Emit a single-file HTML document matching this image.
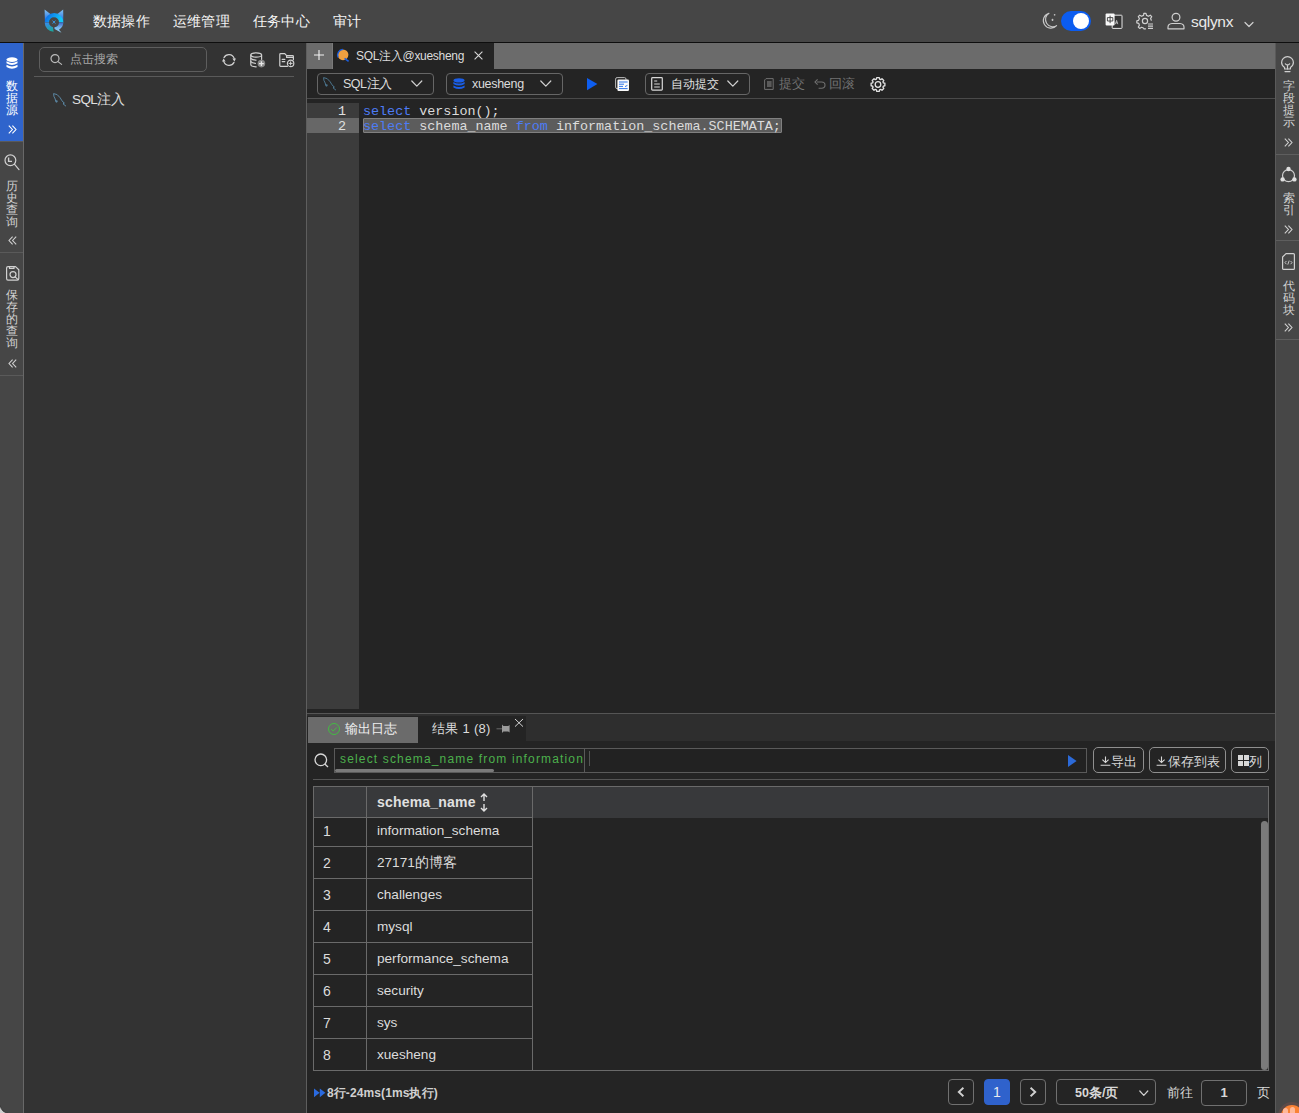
<!DOCTYPE html>
<html><head><meta charset="utf-8">
<style>
*{box-sizing:border-box;margin:0;padding:0}
html,body{width:1299px;height:1113px;overflow:hidden;background:#242424;font-family:"Liberation Sans",sans-serif;color:#dcdcdc}
.a{position:absolute}
svg{position:absolute;display:block;overflow:visible}
.nav{top:11px;font-size:14px;color:#f6f6f6;line-height:20px;letter-spacing:0.2px;font-weight:500}
.vt{font-size:12px;line-height:12px;width:23px;text-align:center;color:#d2d2d2}
.sel{border:1px solid #666;border-radius:4px;height:22px}
.code{font-family:"Liberation Mono",monospace;font-size:13.4px;line-height:15px;white-space:pre}
.row{left:313px;width:956px;height:1px;background:#6a6a6a}
.rn{left:323px;font-size:14px;line-height:16px;color:#dcdcdc}
.rv{left:377px;font-size:13.6px;line-height:16px;color:#dcdcdc}
.btn{border:1px solid #8f8f8f;border-radius:5px;height:26px;top:747px}
.bt{top:754px;font-size:12.5px;line-height:16px;color:#d8d8d8;font-weight:500}
.pg{border:1px solid #707070;border-radius:4px;height:26px;top:1079px}
.st{fill:none;stroke:#d0d0d0;stroke-width:1.2;stroke-linecap:round;stroke-linejoin:round}
</style></head><body>
<!-- header -->
<div class="a" style="left:0;top:0;width:1299px;height:42px;background:#464646"></div>
<div class="a" style="left:0;top:42px;width:1299px;height:1px;background:#0e0e0e"></div>
<svg style="left:44px;top:9px" width="20" height="24" viewBox="0 0 20 24">
<defs>
<linearGradient id="ge" x1="0" y1="0" x2="0" y2="1"><stop offset="0" stop-color="#84c4f4"/><stop offset="1" stop-color="#1c66dc"/></linearGradient>
<linearGradient id="gt" x1="0" y1="0" x2="1" y2="0.3"><stop offset="0" stop-color="#0a5ee6"/><stop offset="1" stop-color="#14c8f6"/></linearGradient>
<linearGradient id="gb" x1="0" y1="0" x2="0.4" y2="1"><stop offset="0" stop-color="#3a8af0"/><stop offset="1" stop-color="#1ea4a0"/></linearGradient>
<linearGradient id="gr" x1="0" y1="0" x2="0" y2="1"><stop offset="0" stop-color="#3a66c8"/><stop offset="0.5" stop-color="#78b8ee"/><stop offset="1" stop-color="#9ad8fa"/></linearGradient>
</defs>
<path d="M0.6 0.4 L6.4 5 L0.9 12.6 Z" fill="url(#ge)"/>
<path d="M19.2 0.4 L13.4 5 L19.3 12.6 Z" fill="url(#ge)"/>
<path d="M0.7 13.3 A9.3 9.3 0 0 1 19.4 13.6 L15 13.3 A5 5 0 0 0 5 13.3 Z" fill="url(#gt)"/>
<path d="M0.7 13.6 L5 13.6 A5 5 0 0 0 9 18.2 L9.6 22.8 A9.3 9.3 0 0 1 0.7 13.6 Z" fill="url(#gb)"/>
<path d="M19.4 13.6 L15 13.6 A5 5 0 0 1 10.4 18.3 L10.6 20 L17.5 23.8 L15 20.8 A9.3 9.3 0 0 0 19.4 13.6 Z" fill="url(#gr)"/>
<path d="M8.6 11.6 L11.4 14.6 M11.4 11.6 L8.6 14.6" stroke="#38a0f0" stroke-width="0.9"/>
</svg>
<div class="a nav" style="left:93px">数据操作</div>
<div class="a nav" style="left:173px">运维管理</div>
<div class="a nav" style="left:253px">任务中心</div>
<div class="a nav" style="left:333px">审计</div>

<!-- header right -->
<svg style="left:1042px;top:12px" width="16" height="18" viewBox="0 0 16 18">
<path d="M7 1.2 A7.6 7.6 0 1 0 14.6 13.6 A6.2 6.2 0 0 1 7 1.2 Z" class="st" style="stroke:#c8c8c8;stroke-width:1.1"/>
<path d="M12.6 2 l0 1.6 M11.8 2.8 l1.6 0" stroke="#c8c8c8" stroke-width="0.8"/>
<path d="M10.5 6.8 l0 2.2 M9.4 7.9 l2.2 0" stroke="#c8c8c8" stroke-width="0.9"/>
</svg>
<div class="a" style="left:1061px;top:11px;width:30px;height:20px;border-radius:10px;background:#0b5cf0"></div>
<div class="a" style="left:1073px;top:13px;width:16px;height:16px;border-radius:8px;background:#fff"></div>
<svg style="left:1105px;top:13px" width="18" height="16" viewBox="0 0 18 16">
<rect x="7.2" y="2.2" width="9.8" height="13.2" rx="0.6" fill="#333" stroke="#e6e6e6" stroke-width="1"/>
<path d="M10.4 11.2 L11.6 7.4 L12.8 11.2 M10.9 9.8 h1.4" fill="none" stroke="#cfcfcf" stroke-width="0.8"/>
<rect x="0.6" y="0.6" width="9" height="12" rx="1" fill="#f8f8f8"/>
<path d="M2.4 4.6 h5.4 v3.4 h-5.4 Z M5.1 2.6 v7.6" fill="none" stroke="#3a3a3a" stroke-width="0.9"/>
</svg>
<svg style="left:1136px;top:12px" width="18" height="18" viewBox="0 0 18 18">
<path d="M8 1.3 L10 1.3 L10.5 3.4 L12.4 4.3 L14.3 3.2 L15.7 4.6 L14.6 6.5 L15.3 8.2" class="st"/>
<path d="M8 1.3 L7.5 3.4 L5.6 4.3 L3.7 3.2 L2.3 4.6 L3.4 6.5 L2.6 8.3 L0.8 8.8 L0.8 10.8 L2.7 11.3 L3.4 13.1 L2.3 15 L3.7 16.4 L5.6 15.3 L7.4 16 L8 16.8 L9.5 16.8" class="st"/>
<circle cx="9" cy="9" r="2.6" class="st"/>
<path d="M12 12 h5 M12 14.2 h5 M12 16.4 h5" stroke="#d0d0d0" stroke-width="1.2"/>
</svg>
<svg style="left:1167px;top:12px" width="18" height="18" viewBox="0 0 18 18">
<circle cx="9" cy="5.2" r="3.9" class="st"/>
<path d="M1 16.8 L1 15.2 Q1 11.8 5 11.5 L13 11.5 Q17 11.8 17 15.2 L17 16.8 Z" class="st"/>
</svg>
<div class="a" style="left:1191px;top:13px;font-size:15.5px;line-height:18px;color:#eaeaea;letter-spacing:-0.3px">sqlynx</div>
<svg style="left:1244px;top:20.5px" width="10" height="7" viewBox="0 0 10 7"><path d="M1 1.5 L5 5.5 L9 1.5" class="st"/></svg>

<!-- left strip -->
<div class="a" style="left:0;top:43px;width:23px;height:1070px;background:#464646"></div>
<div class="a" style="left:0;top:43px;width:23px;height:98px;background:#2f64cc"></div>
<div class="a" style="left:23px;top:43px;width:1px;height:1070px;background:#686868"></div>
<div class="a" style="left:0;top:141px;width:23px;height:1px;background:#5a5a5a"></div>
<div class="a" style="left:0;top:252px;width:23px;height:1px;background:#5a5a5a"></div>
<div class="a" style="left:0;top:375px;width:23px;height:1px;background:#5a5a5a"></div>
<svg style="left:6px;top:57px" width="12" height="13" viewBox="0 0 12 13">
<ellipse cx="6" cy="2.6" rx="5.5" ry="2.4" fill="#fff"/>
<path d="M0.5 4.2 Q6 7.6 11.5 4.2 L11.5 6.2 Q6 9.6 0.5 6.2 Z" fill="#fff"/>
<path d="M0.5 7.8 Q6 11.2 11.5 7.8 L11.5 10 Q6 13.4 0.5 10 Z" fill="#fff"/>
</svg>
<div class="a vt" style="left:0;top:80px;color:#fff">数<br>据<br>源</div>
<svg style="left:8px;top:125px" width="9" height="9" viewBox="0 0 9 9"><path d="M0.8 0.6 L4.4 4.5 L0.8 8.4 M4.4 0.6 L8 4.5 L4.4 8.4" fill="none" stroke="#fff" stroke-width="1.1"/></svg>
<svg style="left:4px;top:154px" width="16" height="17" viewBox="0 0 16 17">
<circle cx="6.4" cy="6.3" r="5.4" class="st"/>
<path d="M10.4 10.2 L15 15.6" class="st"/>
<path d="M4.6 3.6 L4.6 7.4 L8 7.4" stroke="#d0d0d0" stroke-width="1.4" fill="none"/>
</svg>
<div class="a vt" style="left:0;top:180px">历<br>史<br>查<br>询</div>
<svg style="left:8px;top:236px" width="9" height="9" viewBox="0 0 9 9"><path d="M8.2 0.6 L4.6 4.5 L8.2 8.4 M4.6 0.6 L1 4.5 L4.6 8.4" fill="none" stroke="#d0d0d0" stroke-width="1.1"/></svg>
<svg style="left:6px;top:266px" width="14" height="15" viewBox="0 0 14 15">
<path d="M2 0.6 L9.5 0.6 L12.8 3.8 L12.8 12.6 Q12.8 14.2 11.2 14.2 L2 14.2 Q0.6 14.2 0.6 12.6 L0.6 2 Q0.6 0.6 2 0.6 Z" class="st"/>
<path d="M3.5 0.8 L3.5 2.4 L8 2.4 L8 0.8" class="st"/>
<circle cx="7" cy="8.6" r="3" class="st"/>
<path d="M9.2 10.8 L11.8 13.4" class="st"/>
</svg>
<div class="a vt" style="left:0;top:289px">保<br>存<br>的<br>查<br>询</div>
<svg style="left:8px;top:359px" width="9" height="9" viewBox="0 0 9 9"><path d="M8.2 0.6 L4.6 4.5 L8.2 8.4 M4.6 0.6 L1 4.5 L4.6 8.4" fill="none" stroke="#d0d0d0" stroke-width="1.1"/></svg>

<!-- left panel -->
<div class="a" style="left:24px;top:43px;width:282px;height:1070px;background:#333"></div>
<div class="a" style="left:39px;top:47px;width:168px;height:25px;border:1px solid #5e5e5e;border-radius:5px"></div>
<svg style="left:50px;top:54px" width="13" height="11" viewBox="0 0 13 11"><circle cx="5" cy="4.6" r="4" class="st" style="stroke:#bbb"/><path d="M8 7.6 L11.6 10.4" class="st" style="stroke:#bbb"/></svg>
<div class="a" style="left:70px;top:51px;font-size:12px;line-height:16px;color:#a8a8a8">点击搜索</div>
<svg style="left:221px;top:53px" width="16" height="14" viewBox="0 0 16 14">
<path d="M3 4.6 A5.6 5.6 0 0 1 13.2 5.4" class="st"/>
<path d="M13 9.4 A5.6 5.6 0 0 1 2.8 8.6" class="st"/>
<path d="M11.4 5.4 L15 5.4 L13.4 8.4 Z" fill="#d0d0d0"/>
<path d="M4.6 8.6 L1 8.6 L2.6 5.6 Z" fill="#d0d0d0"/>
</svg>
<svg style="left:250px;top:52px" width="16" height="16" viewBox="0 0 16 16">
<ellipse cx="6.2" cy="3" rx="5.4" ry="2.2" class="st"/>
<path d="M0.8 3 L0.8 12.6 Q0.8 14.8 6.2 14.8" class="st"/>
<path d="M11.6 3 L11.6 7.5" class="st"/>
<path d="M0.8 6.3 Q2 7.8 6 8.2 M0.8 9.6 Q2 11 5.4 11.4" class="st"/>
<circle cx="11.4" cy="11.6" r="3.8" fill="#8a8a8a"/>
<path d="M11.4 9.2 L11.4 14 M9 11.6 L13.8 11.6" stroke="#e8e8e8" stroke-width="1.3"/>
</svg>
<svg style="left:279px;top:53px" width="16" height="14" viewBox="0 0 16 14">
<path d="M8.4 13.4 L1.6 13.4 Q0.8 13.4 0.8 12.6 L0.8 1.4 Q0.8 0.6 1.6 0.6 L5.8 0.6 L7.6 2.6 L13.6 2.6 Q14.4 2.6 14.4 3.4 L14.4 6.6" class="st"/>
<path d="M7.6 2.6 L7.6 4.4 L14.4 4.4" class="st"/>
<path d="M3.2 6.4 h2.6 M3.2 8.6 h2.6" class="st"/>
<circle cx="11.6" cy="10.4" r="3.2" class="st"/>
<path d="M11.6 8.8 L11.6 12 M10 10.4 L13.2 10.4" class="st" style="stroke-width:1"/>
</svg>
<div class="a" style="left:34px;top:76px;width:260px;height:1px;background:#5a5a5a"></div>
<svg style="left:53px;top:93px" width="14" height="14" viewBox="0 0 14 14">
<path d="M0.6 0.6 Q4.5 0.6 7.2 4.8 Q8.6 7.4 10 9 L11.4 10 L10 10.8 L13 13.2" fill="none" stroke="#5f8fae" stroke-width="0.9"/>
<path d="M0.6 0.6 Q0.4 3.4 2.2 6 L3 9.2 L4.6 8.6" fill="none" stroke="#5f8fae" stroke-width="0.9"/>
<path d="M2.2 7 L3.6 9 L4.8 7.8 Z" fill="#5f8fae"/>
</svg>
<div class="a" style="left:72px;top:92px;font-size:13.5px;line-height:16px;color:#e0e0e0;letter-spacing:-0.6px;font-weight:500">SQL注入</div>

<!-- main -->
<div class="a" style="left:306px;top:43px;width:1px;height:1070px;background:#5e5e5e"></div>
<div class="a" style="left:307px;top:43px;width:968px;height:26px;background:#6b6b6b"></div>
<div class="a" style="left:332px;top:43px;width:1px;height:26px;background:#7a7a7a"></div>
<svg style="left:313px;top:49px" width="12" height="12" viewBox="0 0 12 12"><path d="M6 1 L6 11 M1 6 L11 6" stroke="#f4f4f4" stroke-width="1.1"/></svg>
<div class="a" style="left:333px;top:43px;width:161px;height:26px;background:#242424"></div>
<svg style="left:337px;top:49px" width="13" height="13" viewBox="0 0 13 13">
<circle cx="6" cy="5.8" r="5.4" fill="#f0a040"/>
<path d="M1.2 8.4 A5.6 5.6 0 0 1 6 0.4" fill="none" stroke="#1a5ee0" stroke-width="1.4"/>
<path d="M7.6 9.4 L11.6 12.4" stroke="#1a5ee0" stroke-width="1.6"/>
</svg>
<div class="a" style="left:356px;top:48px;font-size:12px;line-height:16px;color:#dcdcdc;letter-spacing:-0.3px">SQL注入@xuesheng</div>
<svg style="left:474px;top:51px" width="9" height="9" viewBox="0 0 9 9"><path d="M0.6 0.6 L8.4 8.4 M8.4 0.6 L0.6 8.4" stroke="#d8d8d8" stroke-width="1.1"/></svg>

<!-- toolbar -->
<div class="a sel" style="left:317px;top:73px;width:117px"></div>
<svg style="left:323px;top:77px" width="14" height="14" viewBox="0 0 14 14">
<path d="M0.6 0.6 Q4.5 0.6 7.2 4.8 Q8.6 7.4 10 9 L11.4 10 L10 10.8 L13 13.2" fill="none" stroke="#4f7d98" stroke-width="0.9"/>
<path d="M0.6 0.6 Q0.4 3.4 2.2 6 L3 9.2 L4.6 8.6" fill="none" stroke="#4f7d98" stroke-width="0.9"/>
<path d="M2.2 7 L3.6 9 L4.8 7.8 Z" fill="#4f7d98"/>
</svg>
<div class="a" style="left:343px;top:76px;font-size:12.5px;line-height:16px;letter-spacing:-0.5px">SQL注入</div>
<svg style="left:411px;top:80px" width="12" height="8" viewBox="0 0 12 8"><path d="M0.8 1 L5.8 6.2 L10.8 1" class="st"/></svg>
<div class="a sel" style="left:446px;top:73px;width:117px"></div>
<svg style="left:453px;top:78px" width="12" height="12" viewBox="0 0 12 12">
<ellipse cx="6" cy="2.4" rx="5.6" ry="2.2" fill="#1a5ee8"/>
<path d="M0.4 3.9 Q6 7.2 11.6 3.9 L11.6 5.9 Q6 9.2 0.4 5.9 Z" fill="#1a5ee8"/>
<path d="M0.4 7.4 Q6 10.8 11.6 7.4 L11.6 9.4 Q6 12.8 0.4 9.4 Z" fill="#1a5ee8"/>
</svg>
<div class="a" style="left:472px;top:76px;font-size:12.5px;line-height:16px;letter-spacing:-0.3px">xuesheng</div>
<svg style="left:540px;top:80px" width="12" height="8" viewBox="0 0 12 8"><path d="M0.8 1 L5.8 6.2 L10.8 1" class="st"/></svg>
<svg style="left:587px;top:78px" width="11" height="13" viewBox="0 0 11 13"><path d="M0 0 L10.4 6.1 L0 12.2 Z" fill="#0e5ef0"/></svg>
<svg style="left:615px;top:77px" width="15" height="15" viewBox="0 0 15 15">
<rect x="0.6" y="0.6" width="10.4" height="11" rx="1.5" fill="none" stroke="#bbb" stroke-width="1"/>
<rect x="2.4" y="2.6" width="11.6" height="11.4" rx="1.2" fill="#fafafa"/>
<path d="M4 5 h8.6 M4 7.2 h5 M4 9.4 h4 M4 11.6 h8.6" stroke="#2f74e8" stroke-width="1"/>
<path d="M10 9.6 L12.4 8.4" stroke="#2f74e8" stroke-width="1"/>
</svg>
<div class="a sel" style="left:645px;top:73px;width:105px"></div>
<svg style="left:651px;top:77px" width="12" height="14" viewBox="0 0 12 14">
<rect x="0.7" y="0.7" width="10.6" height="12.4" rx="0.8" fill="none" stroke="#d8d8d8" stroke-width="1.2"/>
<path d="M3.2 4 h3 M3.2 7 h5.6 M3.2 10 h5.6" stroke="#d8d8d8" stroke-width="1.1"/>
</svg>
<div class="a" style="left:671px;top:76px;font-size:12px;line-height:16px;color:#e0e0e0;font-weight:500">自动提交</div>
<svg style="left:727px;top:80px" width="12" height="8" viewBox="0 0 12 8"><path d="M0.8 1 L5.8 6.2 L10.8 1" class="st"/></svg>
<svg style="left:764px;top:78px" width="10" height="12" viewBox="0 0 10 12">
<path d="M2 0.6 L9.2 0.6 L9.2 11.4 L0.6 11.4 L0.6 2 Z" fill="none" stroke="#707070" stroke-width="1"/>
<rect x="3" y="3" width="4.6" height="6" fill="#5a5a5a"/>
</svg>
<div class="a" style="left:779px;top:76px;font-size:12.5px;line-height:16px;color:#727272;font-weight:500">提交</div>
<svg style="left:814px;top:79px" width="12" height="10" viewBox="0 0 12 10">
<path d="M3 3 L7.6 3 Q11 3 11 6 Q11 9.2 7.6 9.2 L4.6 9.2" fill="none" stroke="#707070" stroke-width="1.1"/>
<path d="M3.6 0.4 L1 3 L3.6 5.6" fill="none" stroke="#707070" stroke-width="1.1"/>
</svg>
<div class="a" style="left:829px;top:76px;font-size:12.5px;line-height:16px;color:#727272;font-weight:500">回滚</div>
<svg style="left:870px;top:77px" width="16" height="15" viewBox="0 0 16 15"><path d="M6.44 2.12 L6.74 0.61 L9.26 0.61 L9.56 2.12 L10.70 2.59 L11.98 1.74 L13.76 3.52 L12.91 4.80 L13.38 5.94 L14.89 6.24 L14.89 8.76 L13.38 9.06 L12.91 10.20 L13.76 11.48 L11.98 13.26 L10.70 12.41 L9.56 12.88 L9.26 14.39 L6.74 14.39 L6.44 12.88 L5.30 12.41 L4.02 13.26 L2.24 11.48 L3.09 10.20 L2.62 9.06 L1.11 8.76 L1.11 6.24 L2.62 5.94 L3.09 4.80 L2.24 3.52 L4.02 1.74 L5.30 2.59 Z" fill="none" stroke="#e4e4e4" stroke-width="1.3" stroke-linejoin="round"/><circle cx="8" cy="7.5" r="2.8" fill="none" stroke="#e4e4e4" stroke-width="1.3"/></svg>
<div class="a" style="left:307px;top:98px;width:968px;height:1px;background:#4a4a4a"></div>

<!-- editor -->
<div class="a" style="left:307px;top:103px;width:52px;height:606px;background:#3c3c3c"></div>
<div class="a" style="left:307px;top:118px;width:52px;height:15px;background:#676767"></div>
<div class="a" style="left:363px;top:118px;width:419px;height:15px;background:#5c5c5c;border:1px solid #808080;border-radius:1px"></div>
<div class="a code" style="left:307px;top:104px;width:39px;text-align:right;color:#e0e0e0">1
2</div>
<div class="a code" style="left:363px;top:104px;color:#dcdcdc"><span style="color:#4d7cf6">select</span> version();
<span style="color:#4d7cf6">select</span> schema_name <span style="color:#4d7cf6">from</span> information_schema.SCHEMATA;</div>
<div class="a" style="left:307px;top:713px;width:968px;height:1px;background:#555"></div>

<!-- result tabs -->
<div class="a" style="left:307px;top:714px;width:968px;height:27px;background:#2e2e2e"></div>
<div class="a" style="left:307px;top:716px;width:219px;height:26px;background:#242424"></div>
<div class="a" style="left:308px;top:717px;width:110px;height:26px;background:#6b6b6b"></div>
<svg style="left:328px;top:723px" width="12" height="12" viewBox="0 0 12 12"><circle cx="6" cy="6" r="5.5" fill="none" stroke="#44bb44" stroke-width="1"/><path d="M3.2 6.2 L5.2 8 L8.8 4.4" fill="none" stroke="#44bb44" stroke-width="1"/></svg>
<div class="a" style="left:345px;top:721px;font-size:13.2px;line-height:16px;color:#f0f0f0;font-weight:500">输出日志</div>
<div class="a" style="left:432px;top:721px;font-size:13px;line-height:16px;color:#dcdcdc;letter-spacing:0.3px">结果 1 (8)</div>
<svg style="left:496px;top:724px" width="14" height="10" viewBox="0 0 14 10"><path d="M0.5 4.8 L6 4.8" stroke="#7a7a7a" stroke-width="0.8"/><path d="M6 0.6 L7.4 2 L12.2 2 L13.6 1 L13.6 8.6 L12.2 7.6 L7.4 7.6 L6 9 Z" fill="#9a9a9a"/></svg>
<svg style="left:515px;top:719px" width="8" height="8" viewBox="0 0 8 8"><path d="M0 0 L8 7.6 M8 0 L0 7.6" stroke="#e8e8e8" stroke-width="0.9"/></svg>

<!-- search -->
<svg style="left:314px;top:753px" width="15" height="15" viewBox="0 0 15 15"><circle cx="6.8" cy="6.8" r="5.8" fill="none" stroke="#d8d8d8" stroke-width="1.3"/><path d="M10.8 11 L14 14" stroke="#d8d8d8" stroke-width="1.3"/></svg>
<div class="a" style="left:334px;top:748px;width:753px;height:25px;border:1px solid #5a5a5a;background:#222"></div>
<div class="a" style="left:584px;top:749px;width:1px;height:23px;background:#5a5a5a"></div>
<div class="a" style="left:589px;top:751px;width:1px;height:15px;background:#555"></div>
<div class="a" style="left:335px;top:769px;width:159px;height:3px;background:#7a7a7a;border-radius:2px"></div>
<div class="a" style="left:340px;top:751px;font-size:12px;line-height:16px;color:#4cb04c;letter-spacing:1.16px;width:244px;overflow:hidden;white-space:nowrap">select schema_name from information</div>
<svg style="left:1068px;top:755px" width="9" height="12" viewBox="0 0 9 12"><path d="M0 0 L8.6 6 L0 12 Z" fill="#2c6ad8"/></svg>
<div class="a btn" style="left:1093px;width:51px"></div>
<svg style="left:1100px;top:756px" width="11" height="10" viewBox="0 0 11 10"><path d="M5.5 0.5 L5.5 6.4 M2.4 3.6 L5.5 6.6 L8.6 3.6 M0.6 9.2 L10.4 9.2" fill="none" stroke="#d8d8d8" stroke-width="1.1"/></svg>
<div class="a bt" style="left:1111px">导出</div>
<div class="a btn" style="left:1149px;width:77px"></div>
<svg style="left:1156px;top:756px" width="11" height="10" viewBox="0 0 11 10"><path d="M5.5 0.5 L5.5 6.4 M2.4 3.6 L5.5 6.6 L8.6 3.6 M0.6 9.2 L10.4 9.2" fill="none" stroke="#d8d8d8" stroke-width="1.1"/></svg>
<div class="a bt" style="left:1168px">保存到表</div>
<div class="a btn" style="left:1231px;width:38px"></div>
<svg style="left:1238px;top:755px" width="11" height="11" viewBox="0 0 11 11"><rect x="0" y="0" width="5" height="5" fill="#d8d8d8"/><rect x="6" y="0" width="5" height="5" fill="#d8d8d8"/><rect x="0" y="6" width="5" height="5" fill="#d8d8d8"/><rect x="6" y="6" width="5" height="5" fill="#d8d8d8"/></svg>
<div class="a bt" style="left:1249px">列</div>
<div class="a" style="left:313px;top:779px;width:956px;height:1px;background:#555"></div>

<!-- table -->
<div class="a" style="left:313px;top:786px;width:956px;height:32px;background:#38393b"></div>
<div class="a row" style="top:786px"></div>
<div class="a row" style="top:817px;width:220px"></div>
<div class="a row" style="top:846px;width:220px"></div>
<div class="a row" style="top:878px;width:220px"></div>
<div class="a row" style="top:910px;width:220px"></div>
<div class="a row" style="top:942px;width:220px"></div>
<div class="a row" style="top:974px;width:220px"></div>
<div class="a row" style="top:1006px;width:220px"></div>
<div class="a row" style="top:1038px;width:220px"></div>
<div class="a row" style="top:1070px"></div>
<div class="a" style="left:313px;top:786px;width:1px;height:285px;background:#6a6a6a"></div>
<div class="a" style="left:366px;top:786px;width:1px;height:285px;background:#6a6a6a"></div>
<div class="a" style="left:532px;top:786px;width:1px;height:285px;background:#6a6a6a"></div>
<div class="a" style="left:1268px;top:786px;width:1px;height:285px;background:#6a6a6a"></div>
<div class="a" style="left:377px;top:794px;font-size:14px;line-height:16px;font-weight:bold;color:#e0e0e0;letter-spacing:0.2px">schema_name</div>
<svg style="left:480px;top:793px" width="8" height="19" viewBox="0 0 8 19"><path d="M4 1 L4 8 M1 4 L4 1 L7 4 M4 11 L4 18 M1 15 L4 18 L7 15" fill="none" stroke="#e0e0e0" stroke-width="1.4"/></svg>
<div class="a rn" style="top:823px">1</div><div class="a rv" style="top:823px">information_schema</div>
<div class="a rn" style="top:855px">2</div><div class="a rv" style="top:855px">27171的博客</div>
<div class="a rn" style="top:887px">3</div><div class="a rv" style="top:887px">challenges</div>
<div class="a rn" style="top:919px">4</div><div class="a rv" style="top:919px">mysql</div>
<div class="a rn" style="top:951px">5</div><div class="a rv" style="top:951px">performance_schema</div>
<div class="a rn" style="top:983px">6</div><div class="a rv" style="top:983px">security</div>
<div class="a rn" style="top:1015px">7</div><div class="a rv" style="top:1015px">sys</div>
<div class="a rn" style="top:1047px">8</div><div class="a rv" style="top:1047px">xuesheng</div>
<div class="a" style="left:1261px;top:821px;width:7px;height:249px;background:#7a7a7a;border-radius:4px"></div>

<!-- footer -->
<svg style="left:314px;top:1088px" width="12" height="10" viewBox="0 0 12 10"><path d="M0 0.5 L5.6 4.8 L0 9.2 Z M5.8 0.5 L11.4 4.8 L5.8 9.2 Z" fill="#2a6ae0"/></svg>
<div class="a" style="left:327px;top:1085px;font-size:12px;line-height:16px;color:#d0d0d0;letter-spacing:0.1px;font-weight:bold">8行-24ms(1ms执行)</div>
<div class="a pg" style="left:948px;width:26px"></div>
<svg style="left:957px;top:1087px" width="8" height="10" viewBox="0 0 8 10"><path d="M6.4 0.8 L1.8 5 L6.4 9.2" fill="none" stroke="#d0d0d0" stroke-width="1.9"/></svg>
<div class="a pg" style="left:984px;width:26px;background:#2f62cc;border-color:#2f62cc;color:#e8eaf0;font-size:14px;text-align:center;line-height:24px">1</div>
<div class="a pg" style="left:1020px;width:26px"></div>
<svg style="left:1029px;top:1087px" width="8" height="10" viewBox="0 0 8 10"><path d="M1.6 0.8 L6.2 5 L1.6 9.2" fill="none" stroke="#d0d0d0" stroke-width="1.9"/></svg>
<div class="a pg" style="left:1056px;width:100px"></div>
<div class="a" style="left:1075px;top:1085px;font-size:12.5px;line-height:16px;color:#d8d8d8;font-weight:bold;letter-spacing:0px">50条/页</div>
<svg style="left:1139px;top:1090px" width="10" height="7" viewBox="0 0 10 7"><path d="M0.8 1 L4.8 5.4 L8.8 1" class="st"/></svg>
<div class="a" style="left:1167px;top:1085px;font-size:12.5px;line-height:16px;color:#d8d8d8;font-weight:500">前往</div>
<div class="a pg" style="left:1201px;width:46px;top:1080px;text-align:center;font-size:13px;line-height:24px;color:#d8d8d8;font-weight:bold">1</div>
<div class="a" style="left:1257px;top:1085px;font-size:13px;line-height:16px;color:#d8d8d8">页</div>

<!-- right strip -->
<div class="a" style="left:1275px;top:43px;width:1px;height:1070px;background:#5a5a5a"></div>
<div class="a" style="left:1276px;top:43px;width:23px;height:1070px;background:#474747"></div>
<div class="a" style="left:1276px;top:154px;width:23px;height:1px;background:#5e5e5e"></div>
<div class="a" style="left:1276px;top:240px;width:23px;height:1px;background:#5e5e5e"></div>
<div class="a" style="left:1276px;top:339px;width:23px;height:1px;background:#5e5e5e"></div>
<svg style="left:1281px;top:57px" width="13" height="17" viewBox="0 0 13 17">
<path d="M3.6 12 L3.6 10.6 Q0.6 8.6 0.6 5.6 A5.9 5.9 0 0 1 12.4 5.6 Q12.4 8.6 9.4 10.6 L9.4 12 Z" class="st"/>
<path d="M6.5 12 L6.5 8 M4.4 6.8 Q6.5 9 8.6 6.8 M4 14.6 h5" class="st"/>
</svg>
<div class="a vt" style="left:1277px;top:80px">字<br>段<br>提<br>示</div>
<svg style="left:1284px;top:138px" width="9" height="9" viewBox="0 0 9 9"><path d="M0.8 0.6 L4.4 4.5 L0.8 8.4 M4.4 0.6 L8 4.5 L4.4 8.4" fill="none" stroke="#d0d0d0" stroke-width="1.1"/></svg>
<svg style="left:1280px;top:166px" width="17" height="17" viewBox="0 0 17 17">
<circle cx="8.5" cy="9.6" r="6" class="st"/>
<circle cx="8.5" cy="3" r="2.2" fill="#e0e0e0"/>
<circle cx="2.6" cy="13.4" r="2.2" fill="#e0e0e0"/>
<circle cx="14.4" cy="13.4" r="2.2" fill="#e0e0e0"/>
</svg>
<div class="a vt" style="left:1277px;top:192px">索<br>引</div>
<svg style="left:1284px;top:225px" width="9" height="9" viewBox="0 0 9 9"><path d="M0.8 0.6 L4.4 4.5 L0.8 8.4 M4.4 0.6 L8 4.5 L4.4 8.4" fill="none" stroke="#d0d0d0" stroke-width="1.1"/></svg>
<svg style="left:1282px;top:253px" width="13" height="17" viewBox="0 0 13 17">
<path d="M4 0.6 L11.4 0.6 Q12.4 0.6 12.4 1.6 L12.4 15.4 Q12.4 16.4 11.4 16.4 L1.6 16.4 Q0.6 16.4 0.6 15.4 L0.6 4 Z" class="st"/>
<path d="M4.4 8 L3 9.6 L4.4 11.2 M8.6 8 L10 9.6 L8.6 11.2 M7.2 7.6 L5.8 11.6" fill="none" stroke="#d0d0d0" stroke-width="0.9"/>
</svg>
<div class="a vt" style="left:1277px;top:280px">代<br>码<br>块</div>
<svg style="left:1284px;top:323px" width="9" height="9" viewBox="0 0 9 9"><path d="M0.8 0.6 L4.4 4.5 L0.8 8.4 M4.4 0.6 L8 4.5 L4.4 8.4" fill="none" stroke="#d0d0d0" stroke-width="1.1"/></svg>
<div class="a" style="left:1278px;top:1102px;width:28px;height:28px;border-radius:14px;background:#f98236;border:3px solid #5c4a48"></div><div class="a" style="left:1283px;top:1108px;width:5px;height:7px;border-radius:3px;background:#ffb898"></div><div class="a" style="left:1290px;top:1107px;width:5px;height:8px;border-radius:3px;background:#ffb898"></div>
<svg style="left:0;top:1105px" width="8" height="8" viewBox="0 0 8 8"><path d="M0 0 L0 8 L8 8 Q1.5 7.5 0 0 Z" fill="#cfcfcf"/><path d="M0 0 Q1.5 7.5 8 8" fill="none" stroke="#2a2a2a" stroke-width="0.8"/></svg>
</body></html>
